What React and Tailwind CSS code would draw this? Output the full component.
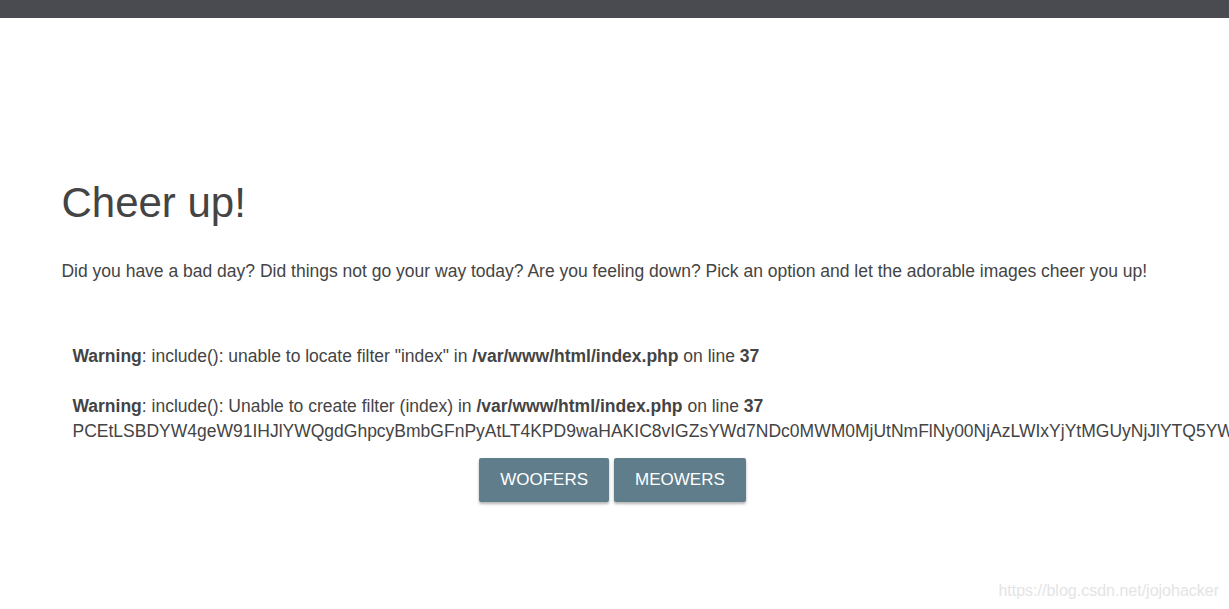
import React from "react";

const base64 =
  "PCEtLSBDYW4geW91IHJlYWQgdGhpcyBmbGFnPyAtLT4KPD9waHAKIC8vIGZsYWd7NDc0MWM0MjUtNmFlNy00NjAzLWIxYjYtMGUyNjJlYTQ5YWQ0fQo/Pgo8IS0tIENhbiB5b3UgcmVhZCB0aGlzIGZsYWc/IC0tPgo=";

const App = () => {
  return (
    <div
      className="relative h-[609px] w-full overflow-hidden bg-white text-[#444] leading-normal"
      style={{ fontFamily: '"Liberation Sans", Arial, sans-serif' }}
    >
      {/* top nav */}
      <div className="h-[18px] bg-[#4a4b50]" />

      <div className="mx-auto w-[90%]">
        <h1 className="mt-[162px] text-[42px] leading-[1.1] font-normal">Cheer up!</h1>
        <p className="mt-[33px] text-[17.5px] leading-[25px]">
          Did you have a bad day? Did things not go your way today? Are you feeling down? Pick an
          option and let the adorable images cheer you up!
        </p>

        {/* php warnings leaking into the page */}
        <div className="mt-[60px] pl-[11px] text-[17.5px] leading-[25px] whitespace-nowrap">
          <div>
            <b>Warning</b>: include(): unable to locate filter "index" in{" "}
            <b>/var/www/html/index.php</b> on line <b>37</b>
          </div>
          <div className="h-[25px]" />
          <div>
            <b>Warning</b>: include(): Unable to create filter (index) in{" "}
            <b>/var/www/html/index.php</b> on line <b>37</b>
          </div>
          <div>{base64}</div>
        </div>

        <div className="mt-[14px] flex justify-center gap-[5px] pr-[4px]">
          <button className="h-[44px] rounded-[2px] bg-[#607d8b] px-[21px] text-[17px] text-white shadow-[0_2px_3px_rgba(0,0,0,0.3)]">
            WOOFERS
          </button>
          <button className="h-[44px] rounded-[2px] bg-[#607d8b] px-[21px] text-[17px] text-white shadow-[0_2px_3px_rgba(0,0,0,0.3)]">
            MEOWERS
          </button>
        </div>
      </div>

      <div className="absolute right-[10px] bottom-[6px] text-[16px] text-[#e4e4e4]">
        https://blog.csdn.net/jojohacker
      </div>
    </div>
  );
};

export default App;
